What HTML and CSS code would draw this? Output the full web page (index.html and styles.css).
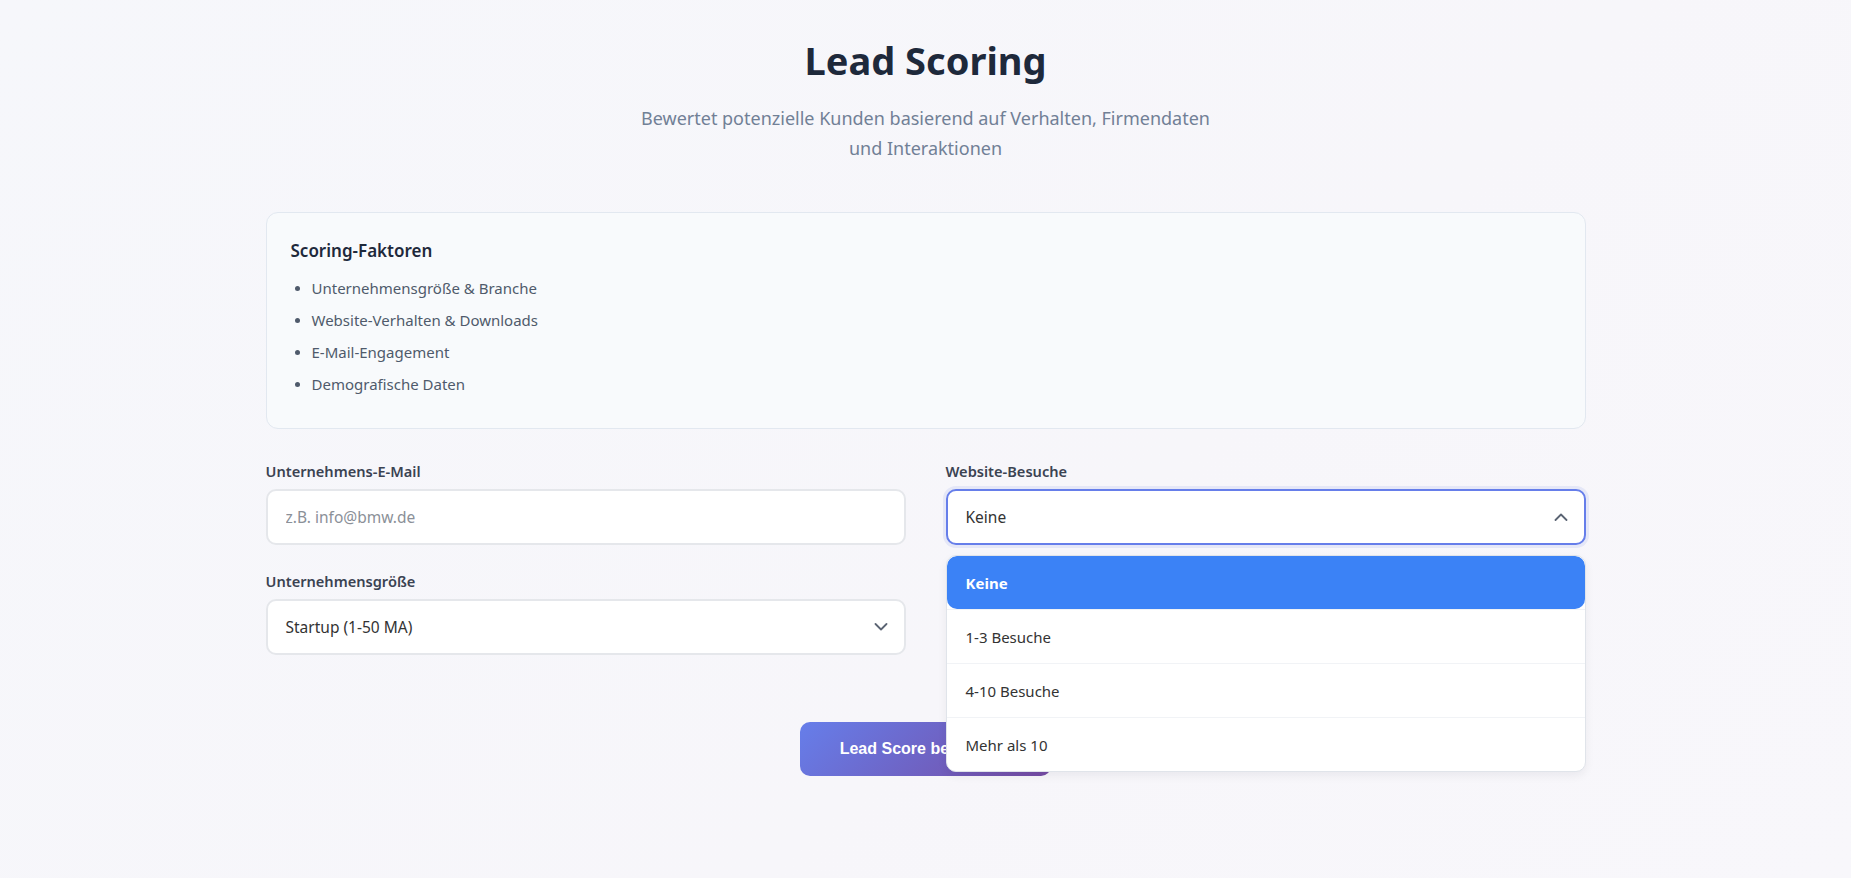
FILE: index.html
```html
<!DOCTYPE html>
<html lang="de">
<head>
<meta charset="utf-8">
<title>Lead Scoring</title>
<link rel="stylesheet" href="styles.css">
</head>
<body>
<main class="page">
  <header class="hero">
    <h1 class="hero-title">Lead Scoring</h1>
    <p class="hero-sub">Bewertet potenzielle Kunden basierend auf Verhalten, Firmendaten und Interaktionen</p>
  </header>

  <section class="factors">
    <h3 class="factors-title">Scoring-Faktoren</h3>
    <ul class="factors-list">
      <li class="factor">Unternehmensgröße &amp; Branche</li>
      <li class="factor">Website-Verhalten &amp; Downloads</li>
      <li class="factor">E-Mail-Engagement</li>
      <li class="factor">Demografische Daten</li>
    </ul>
  </section>

  <form class="form">
    <div class="grid">
      <div class="field">
        <label class="label">Unternehmens-E-Mail</label>
        <input class="input" type="text" placeholder="z.B. info@bmw.de">
      </div>
      <div class="field">
        <label class="label">Website-Besuche</label>
        <div class="select-wrap">
          <div class="select is-open">
            <span class="select-value">Keine</span>
            <svg class="chev" width="14" height="8" viewBox="0 0 14 8"><path d="M1.5 7 L7 1.5 L12.5 7" fill="none" stroke="#5b6473" stroke-width="1.8" stroke-linecap="round" stroke-linejoin="round"/></svg>
          </div>
          <ul class="dropdown">
            <li class="option is-selected">Keine</li>
            <li class="option">1-3 Besuche</li>
            <li class="option">4-10 Besuche</li>
            <li class="option">Mehr als 10</li>
          </ul>
        </div>
      </div>
      <div class="field">
        <label class="label">Unternehmensgröße</label>
        <div class="select">
          <span class="select-value">Startup (1-50 MA)</span>
          <svg class="chev" width="14" height="8" viewBox="0 0 14 8"><path d="M1.5 1 L7 6.5 L12.5 1" fill="none" stroke="#5b6473" stroke-width="1.8" stroke-linecap="round" stroke-linejoin="round"/></svg>
        </div>
      </div>
    </div>
    <div class="actions">
      <button class="btn" type="button">Lead Score berechnen</button>
    </div>
  </form>
</main>
</body>
</html>
```

FILE: styles.css
```css
* { box-sizing: border-box; }

html, body { height: 100%; }

body {
  margin: 0;
  font-family: "Noto Sans", "Open Sans", "DejaVu Sans", sans-serif;
  background: linear-gradient(135deg, #f6f7fb 0%, #f7f6fa 60%, #f8f7fb 100%);
  color: #333;
  overflow: hidden;
}

.page {
  width: 1320px;
  margin: 0 auto;
  padding-top: 36px;
}

.hero { text-align: center; }

.hero-title {
  margin: 0;
  font-size: 38px;
  line-height: 48px;
  font-weight: 700;
  color: #1e293b;
}

.hero-sub {
  margin: 19px auto 0;
  max-width: 590px;
  font-size: 18px;
  line-height: 30px;
  color: #718096;
}

.factors {
  margin-top: 49px;
  background: #f8fafc;
  border: 1px solid #e2e8f0;
  border-radius: 12px;
  padding: 24px 24px 28px;
}

.factors-title {
  margin: 0;
  font-size: 17px;
  line-height: 28px;
  font-weight: 600;
  color: #1e293b;
}

.factors-list {
  list-style: none;
  margin: 7px 0 0;
  padding: 0;
}

.factor {
  display: flex;
  align-items: center;
  gap: 12px;
  padding: 4px 0;
  font-size: 15px;
  line-height: 24px;
  color: #4f5a6b;
}

.factor::before {
  content: "";
  width: 5px;
  height: 5px;
  margin-left: 4px;
  border-radius: 50%;
  background: #4f5a6b;
  flex: none;
}

.form { margin-top: 32px; }

.grid {
  display: grid;
  grid-template-columns: 1fr 1fr;
  column-gap: 40px;
  row-gap: 26px;
}

.field { display: flex; flex-direction: column; }

.label {
  display: block;
  margin-bottom: 8px;
  font-size: 14.6px;
  line-height: 20px;
  font-weight: 600;
  color: #3b4352;
}

.input,
.select {
  height: 56px;
  width: 100%;
  border: 2px solid #e5e7eb;
  border-radius: 10px;
  background: #fff;
  padding: 0 18px;
  font-family: inherit;
  font-size: 15.5px;
  color: #333;
}

.input { outline: none; }
.input::placeholder { color: #8b9098; }

.select {
  display: flex;
  align-items: center;
  justify-content: space-between;
}

.select.is-open {
  border-color: #667eea;
  box-shadow: 0 0 0 3px rgba(102, 126, 234, 0.12);
}

.select-value { color: #333; }

.chev { margin-right: -2px; flex: none; }

.select-wrap { position: relative; }

.dropdown {
  position: absolute;
  top: calc(100% + 10px);
  left: 0;
  right: 0;
  z-index: 5;
  list-style: none;
  margin: 0;
  padding: 0;
  background: #fff;
  border: 1px solid #e0e4ea;
  border-radius: 10px;
  box-shadow: 0 4px 10px rgba(15, 23, 42, 0.06);
  overflow: hidden;
}

.option {
  height: 54px;
  display: flex;
  align-items: center;
  padding: 0 19px;
  font-size: 15px;
  color: #333;
  border-top: 1px solid #f1f3f6;
}

.option:first-child { border-top: none; height: 53px; }

.option.is-selected {
  background: #3b82f6;
  color: #fff;
  font-weight: 700;
  border-radius: 10px;
}

.actions {
  display: flex;
  justify-content: center;
  margin-top: 67px;
}

.btn {
  border: none;
  border-radius: 10px;
  padding: 18px 40px;
  font-family: "Liberation Sans", Arial, sans-serif;
  font-size: 16px;
  line-height: 18px;
  font-weight: 700;
  color: #fff;
  background: linear-gradient(135deg, #667eea 0%, #764ba2 100%);
  cursor: pointer;
}
```
